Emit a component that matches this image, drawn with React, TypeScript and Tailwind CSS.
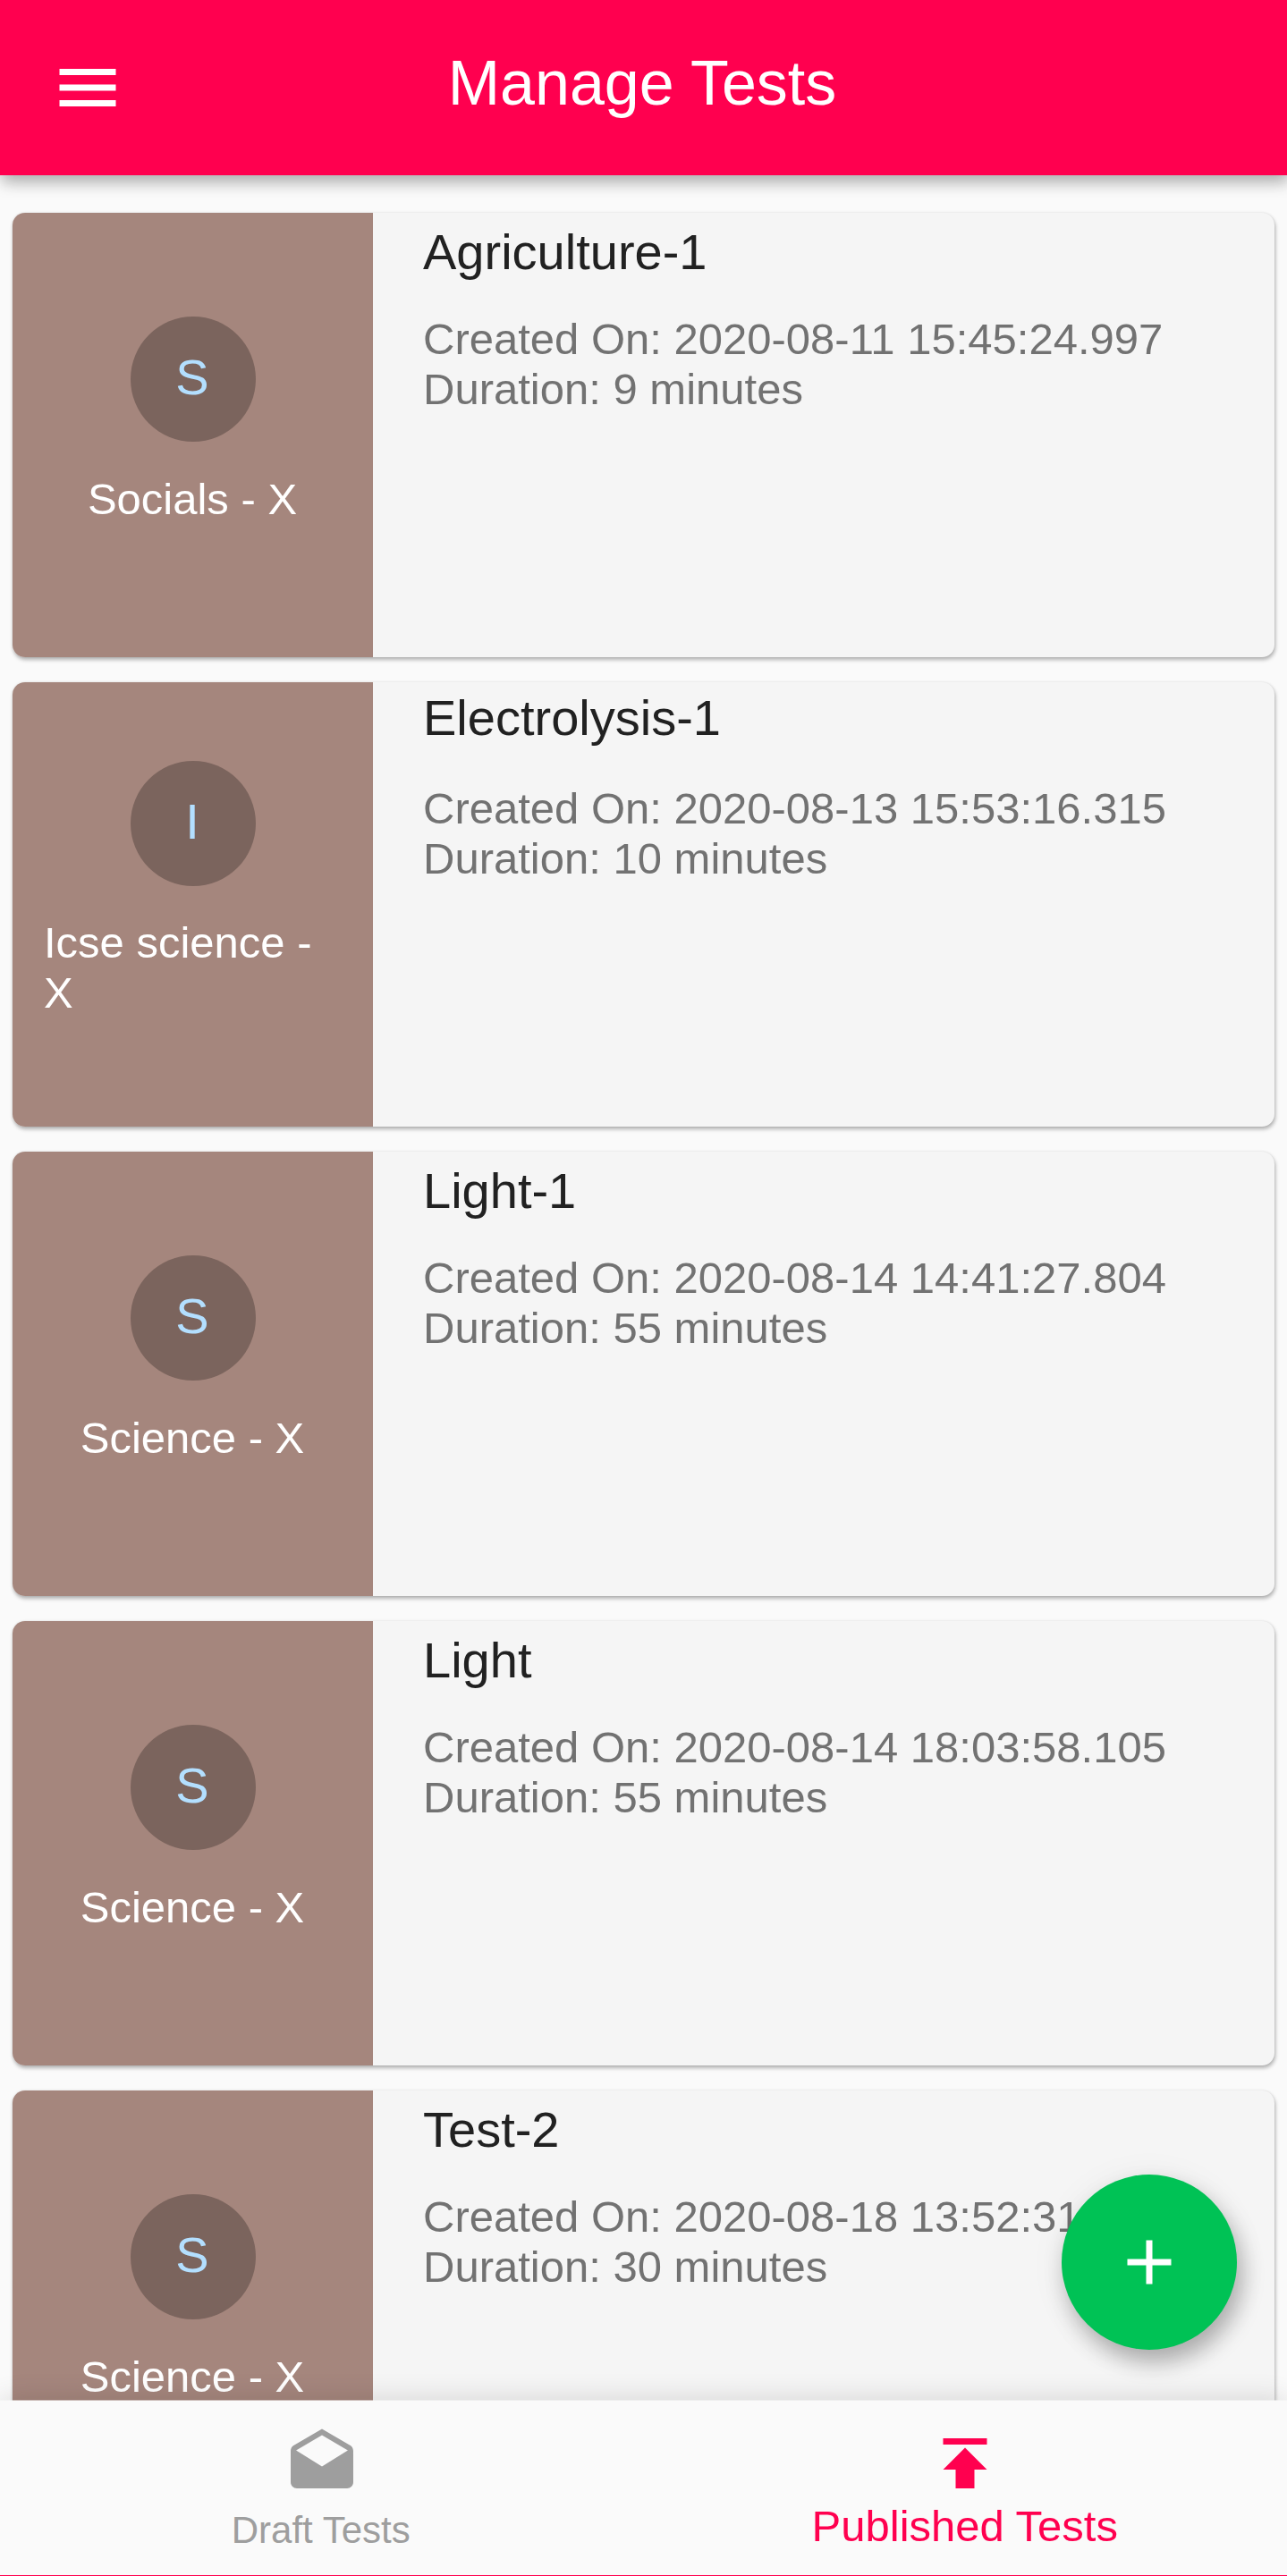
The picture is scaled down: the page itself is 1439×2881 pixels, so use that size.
const tests = [
  { subject: 'Socials - X', title: 'Agriculture-1', created: '2020-08-11 15:45:24.997', minutes: 9, raised: false },
  { subject: 'Icse science - X', title: 'Electrolysis-1', created: '2020-08-13 15:53:16.315', minutes: 10, raised: true },
  { subject: 'Science - X', title: 'Light-1', created: '2020-08-14 14:41:27.804', minutes: 55, raised: false },
  { subject: 'Science - X', title: 'Light', created: '2020-08-14 18:03:58.105', minutes: 55, raised: false },
  { subject: 'Science - X', title: 'Test-2', created: '2020-08-18 13:52:31.482', minutes: 30, raised: false },
];

type Test = (typeof tests)[number];

function TestCard({ test }: { test: Test }) {
  return (
    <article className="flex h-[497px] shrink-0 overflow-hidden rounded-[14px] bg-[#f5f5f5] shadow-[1px_3px_4px_rgba(0,0,0,0.28),0_0_3px_rgba(0,0,0,0.1)]">
      <div className="flex w-[403px] shrink-0 flex-col items-center justify-center bg-[#a5867d] px-[35px] pb-[35px]">
        <div className="mb-[35px] flex size-[140px] shrink-0 items-center justify-center rounded-full bg-[#7b645d] pr-px pb-[3px] text-[56px] leading-[64px] text-[#b3dfff]">
          {test.subject[0]}
        </div>
        <p className={`text-[49px] leading-[56px] text-white ${test.raised ? '' : '-mb-px pt-px pr-px'}`}>{test.subject}</p>
      </div>
      <div className="min-w-0 flex-1 pl-14">
        <h2 className={`text-[56px] leading-[64px] text-[#212121] ${test.raised ? 'pt-[8px] pb-[41px]' : 'pt-[12px] pb-[37px]'}`}>
          {test.title}
        </h2>
        <p className="text-[49px] leading-[56px] whitespace-nowrap text-[#727272]">Created On: {test.created}</p>
        <p className="text-[49px] leading-[56px] text-[#727272]">Duration: {test.minutes} minutes</p>
      </div>
    </article>
  );
}

export default function App() {
  return (
    <div className="relative flex h-[2881px] w-full flex-col overflow-hidden border-b border-[#ff004f] bg-[#fafafa] font-['Liberation_Sans',Arial,sans-serif]">
      <header className="relative z-10 grid h-[196px] shrink-0 grid-cols-[1fr_auto_1fr] items-center bg-[#ff004f] px-14 text-white shadow-[2px_8px_16px_rgba(0,0,0,0.28),0_2px_24px_rgba(0,0,0,0.06)]">
        <button className="size-[84px]" aria-label="Menu">
          <svg viewBox="0 0 24 24" fill="currentColor">
            <path d="M3 18h18v-2H3v2zm0-5h18v-2H3v2zm0-7v2h18V6H3z" />
          </svg>
        </button>
        <h1 className="pr-[3px] pb-[10px] text-[70px] leading-[80px]">Manage Tests</h1>
      </header>

      <main className="-mb-px flex min-h-0 flex-1 flex-col gap-7 overflow-hidden px-[14px] pt-[42px]">
        {tests.map((test) => (
          <TestCard key={test.title} test={test} />
        ))}
      </main>

      <button
        aria-label="Add test"
        className="absolute right-[56.5px] bottom-[252px] flex size-[196px] items-center justify-center rounded-full bg-[#00c255] text-white shadow-[6px_14px_24px_rgba(0,0,0,0.28),0_4px_40px_rgba(0,0,0,0.06)]"
      >
        <svg viewBox="0 0 24 24" fill="currentColor" className="size-[84px]">
          <path d="M19 13h-6v6h-2v-6H5v-2h6V5h2v6h6v2z" />
        </svg>
      </button>

      <nav className="relative z-10 grid h-[196px] shrink-0 grid-cols-2 border-t border-[#fafafa]/50 bg-[#fafafa] bg-clip-padding shadow-[0_-2px_28px_rgba(0,0,0,0.12)]">
        <button className="flex flex-col items-center pt-[28px] text-[#9e9e9e]">
          <svg viewBox="0 0 24 24" fill="currentColor" className="size-[84px]">
            <path d="M21.99 8c0-.72-.37-1.35-.94-1.7L12 1 2.95 6.3C2.38 6.65 2 7.28 2 8v10c0 1.1.9 2 2 2h16c1.1 0 2-.9 2-2l-.01-10zM12 13L3.74 7.84 12 3l8.26 4.84L12 13z" />
          </svg>
          <span className="mt-[9px] pr-[2px] text-[42px] leading-[48px]">Draft Tests</span>
        </button>
        <button className="flex flex-col items-center pt-[28px] text-[#ff004f]">
          <svg viewBox="0 0 24 24" fill="currentColor" className="size-[84px]">
            <path d="M5 4v2h14V4H5zm0 10h4v6h6v-6h4l-7-7-7 7z" />
          </svg>
          <span className="pr-px text-[49px] leading-[56px]">Published Tests</span>
        </button>
      </nav>
    </div>
  );
}
